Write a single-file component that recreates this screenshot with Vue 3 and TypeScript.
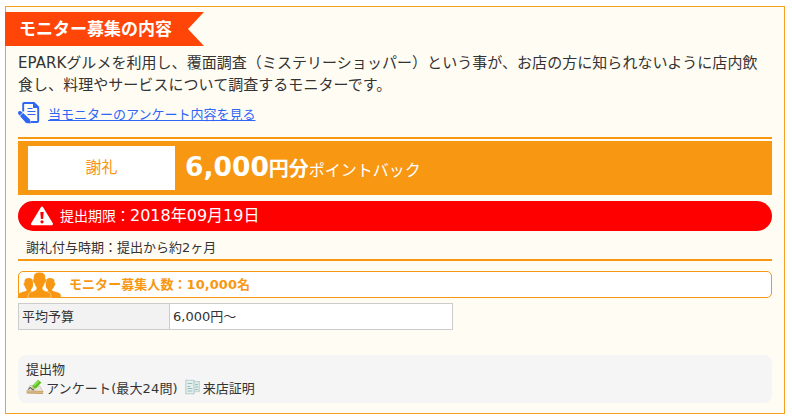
<script setup lang="ts">
const detail = {
  title: 'モニター募集の内容',
  lead: [
    'EPARKグルメを利用し、覆面調査（ミステリーショッパー）という事が、お店の方に知られないように店内飲',
    '食し、料理やサービスについて調査するモニターです。',
  ],
  link: '当モニターのアンケート内容を見る',
  deadline: '2018年09月19日',
  timing: '謝礼付与時期：提出から約2ヶ月',
  recruit: 'モニター募集人数：10,000名',
  budget: '6,000円～',
}
</script>

<template>
  <section class="panel" lang="ja">
    <h2 class="ribbon">{{ detail.title }}</h2>
    <div class="content">
      <p class="lead">
        <span v-for="line in detail.lead" :key="line">{{ line }}</span>
      </p>
      <div class="survey">
        <svg class="doc-icon" viewBox="0 0 22 22" aria-hidden="true">
          <path d="M5.2 9.5V2Q5.2 1 6.2 1H16L20.2 5.2V19Q20.2 20 19.2 20H12.5" fill="none" stroke="#2f66f6" stroke-width="1.9" />
          <path d="M15 .5V6H21z" fill="#2f66f6" />
          <path d="M9.5 6.5H14.5M9.5 9.5H17.5M9.5 12.5H17.5" stroke="#2f66f6" stroke-width="1.1" />
          <path d="M0 10.8Q0 9.2 1.6 9Q2.8 8.8 3.6 9.7L4.6 10.7L1.6 13.5L.6 12.4Q0 11.7 0 10.8zM2 14L5.1 11.1L12 17.4L12.5 21.6L8 21z" fill="#2f66f6" />
        </svg>
        <a class="survey-link">{{ detail.link }}</a>
      </div>
      <div class="reward-group">
        <div class="reward">
          <span class="reward-label">謝礼</span>
          <p class="reward-value"><b class="amount">6,000</b><b class="unit">円分</b>ポイントバック</p>
        </div>
        <div class="deadline">
          <svg class="warn-icon" viewBox="0 0 24 20" aria-hidden="true">
            <path d="M12 1.8L21.7 18H2.3z" fill="#fff" stroke="#fff" stroke-width="2.6" stroke-linejoin="round" />
            <path d="M10.3 6H13.7L13.1 13H10.9z" fill="#f00" />
            <circle cx="12" cy="15.8" r="1.6" fill="#f00" />
          </svg>
          <span class="deadline-label">提出期限：</span><span class="deadline-date">{{ detail.deadline }}</span>
        </div>
        <p class="timing">{{ detail.timing }}</p>
      </div>
      <div class="recruit">
        <svg class="people-icon" viewBox="0 0 43 26" aria-hidden="true">
          <g fill="#f89812">
            <path d="M6.5 9Q6.8 6 10.8 6Q15 6 15 9.5V14Q14.6 16 13 17.5V19L17 21V26H0V23.5Q0 21.6 2 20.8L8.5 18.7V17.3Q7 16 6.6 13.8Q5.3 13.5 5.6 11.5Q5.8 11 6.5 11z" />
            <path d="M27.7 9.5Q27.7 6 32 6Q36.2 6 36.5 9V11Q37.2 11 37.4 11.5Q37.7 13.5 36.4 13.8Q36 16 34.2 17.3V18.7L40.7 20.8Q42.8 21.6 42.8 23.5V26H25V21L29.8 19V17.5Q28 16 27.7 14z" />
            <path d="M15.6 4.5Q16 .2 21.5 .2Q27 .2 27.4 4.5V7Q28.6 7.2 28.2 9.2Q27.8 11 26.8 11Q26.3 13.8 24.7 15.3V17.3Q25.5 18.7 31 20.3Q33.2 21.2 33.2 26H9.8Q9.8 21.2 12 20.3Q17.5 18.7 18.3 17.3V15.3Q16.7 13.8 16.2 11Q15.2 11 14.8 9.2Q14.4 7.2 15.6 7z" stroke="#fff" stroke-width=".4" />
          </g>
        </svg>
        <strong>{{ detail.recruit }}</strong>
      </div>
      <dl class="budget">
        <dt>平均予算</dt>
        <dd>{{ detail.budget }}</dd>
      </dl>
      <div class="submission">
        <p>提出物</p>
        <div class="items">
          <svg class="write-icon" viewBox="0 0 18 16" aria-hidden="true">
            <path d="M4 6.5L13.8 7L17 12.5L1 12.3z" fill="#e9e5d8" stroke="#bdb49b" stroke-width=".6" />
            <path d="M.5 11.6L17.2 12L17 15L.8 14.4z" fill="#c69b62" />
            <path d="M1 12.8L17 13.3" stroke="#f2dfbd" stroke-width=".6" />
            <path d="M2.6 10.6Q4 7.4 5.4 9.5T8 10.4" fill="none" stroke="#596068" stroke-width="1.1" />
            <path d="M6.2 9.8L6.9 6.2L12 .8L15.4 3.6L9.9 9.4z" fill="#5ac427" />
            <path d="M8.2 6.7L12.6 1.8" stroke="#a5ed62" stroke-width="1.1" />
            <path d="M6.2 9.8L6.9 7.4L9 9.4z" fill="#e8ba76" />
          </svg>
          <span class="survey-item">アンケート(最大24問)</span>
          <svg class="receipt-icon" viewBox="0 0 15 16" aria-hidden="true">
            <path d="M6.5 2L7.5 3L8.5 2L9.5 3L10.5 2L11.5 3L12.5 2L13.5 3L14.3 2V13L13.3 12.2L12.3 13L11.3 12.2L10.3 13L9.3 12.2L8.3 13L6.5 12z" fill="#dcebe8" stroke="#9cbab8" stroke-width=".6" />
            <path d="M1.5 .8L2.5 1.8L3.5 .8L4.5 1.8L5.5 .8L6.5 1.8L7.5 .8L8.5 1.8L9 1V15.2L8 14.4L7 15.2L6 14.4L5 15.2L4 14.4L3 15.2L2 14.4L.8 15.2V1z" fill="#e3f0ed" stroke="#93b3b1" stroke-width=".6" />
            <path d="M2.5 4.5H7.3M2.5 7.5H5.2M2.5 9.5H7.3M2.5 12H7.3M10.3 5.5H12.8M10.3 8H12.8M10.3 10.5H12.8" stroke="#8aaeac" stroke-width=".8" />
          </svg>
          <span>来店証明</span>
        </div>
      </div>
    </div>
  </section>
</template>

<style>
body {
  background: #fff;
}
</style>

<style scoped>
.panel {
  box-sizing: border-box;
  width: 780px;
  height: 408px;
  margin: 6px 0 0 5px;
  padding-top: 5px;
  border: 1px solid #f5a01f;
  background: #fffcf4;
  color: #333;
  font: 13px/20px "DejaVu Sans", "Noto Sans CJK JP", sans-serif;
  white-space: nowrap;
}
p, h2, dl, dd {
  margin: 0;
}
.ribbon {
  width: 185px;
  height: 34px;
  margin-left: -1px;
  padding-left: 14px;
  background: #ff4507;
  clip-path: polygon(0 0, 100% 0, calc(100% - 16px) 50%, 100% 100%, 0 100%);
  color: #fff;
  font-size: 17px;
  line-height: 34px;
}
.content {
  padding: 6px 12px 0;
}
.lead {
  font-size: 15px;
  line-height: 22px;
  letter-spacing: 0.045px;
}
.lead span {
  display: block;
}
.survey {
  display: flex;
  align-items: center;
  height: 28px;
  margin: 4px 0 9px;
  color: #2f66f6;
}
.doc-icon {
  width: 22px;
  height: 22px;
  margin: -3px 8px 0 0;
}
.survey-link {
  padding-top: 1px;
  text-decoration: underline;
}
.reward-group {
  box-sizing: border-box;
  height: 124px;
  padding-top: 2px;
  border-top: 2px solid #f89812;
  border-bottom: 2px solid #f89812;
}
.reward {
  display: flex;
  align-items: center;
  box-sizing: border-box;
  height: 54px;
  padding-left: 10px;
  background: #f89812;
  color: #fff;
  font-size: 16px;
}
.reward-label {
  width: 147px;
  background: #fff;
  color: #f89812;
  line-height: 44px;
  text-align: center;
}
.reward-value {
  padding-top: 2px;
  margin-left: 10px;
  line-height: 44px;
}
.amount {
  font-size: 26.5px;
}
.unit {
  font-size: 20px;
}
.deadline {
  display: flex;
  align-items: center;
  height: 30px;
  margin-top: 6px;
  padding-left: 12px;
  border-radius: 15px;
  background: #f00;
  color: #fff;
}
.warn-icon {
  width: 24px;
  height: 20px;
  margin-right: 6px;
}
.deadline-label {
  font-size: 14px;
}
.deadline-date {
  font-size: 16px;
}
.timing {
  padding: 7px 0 0 8px;
}
.recruit {
  display: flex;
  align-items: center;
  box-sizing: border-box;
  height: 27px;
  margin-top: 10px;
  border: 1px solid #f89812;
  border-radius: 5px;
  background: #fff;
  color: #f89812;
  letter-spacing: 0.06px;
}
.people-icon {
  flex: none;
  width: 43px;
  height: 26px;
  margin: 0 8px 0 -1px;
}
.budget {
  display: flex;
  box-sizing: border-box;
  width: 435px;
  height: 27px;
  margin-top: 5px;
  border: 1px solid #ccc;
  background: #fff;
  line-height: 25px;
}
.budget dt {
  box-sizing: border-box;
  width: 151px;
  padding-left: 3px;
  border-right: 1px solid #ccc;
  background: #f2f2f2;
}
.budget dd {
  padding-left: 3px;
}
.submission {
  box-sizing: border-box;
  height: 48px;
  margin-top: 25px;
  padding: 5px 8px;
  border-radius: 8px;
  background: #f5f5f5;
  line-height: 19px;
}
.items {
  display: flex;
  align-items: center;
}
.write-icon {
  width: 18px;
  height: 16px;
  margin: -3px 2px 0 0;
}
.survey-item {
  letter-spacing: 0.13px;
}
.receipt-icon {
  width: 15px;
  height: 16px;
  margin: -3px 3px 0 7px;
}
</style>
